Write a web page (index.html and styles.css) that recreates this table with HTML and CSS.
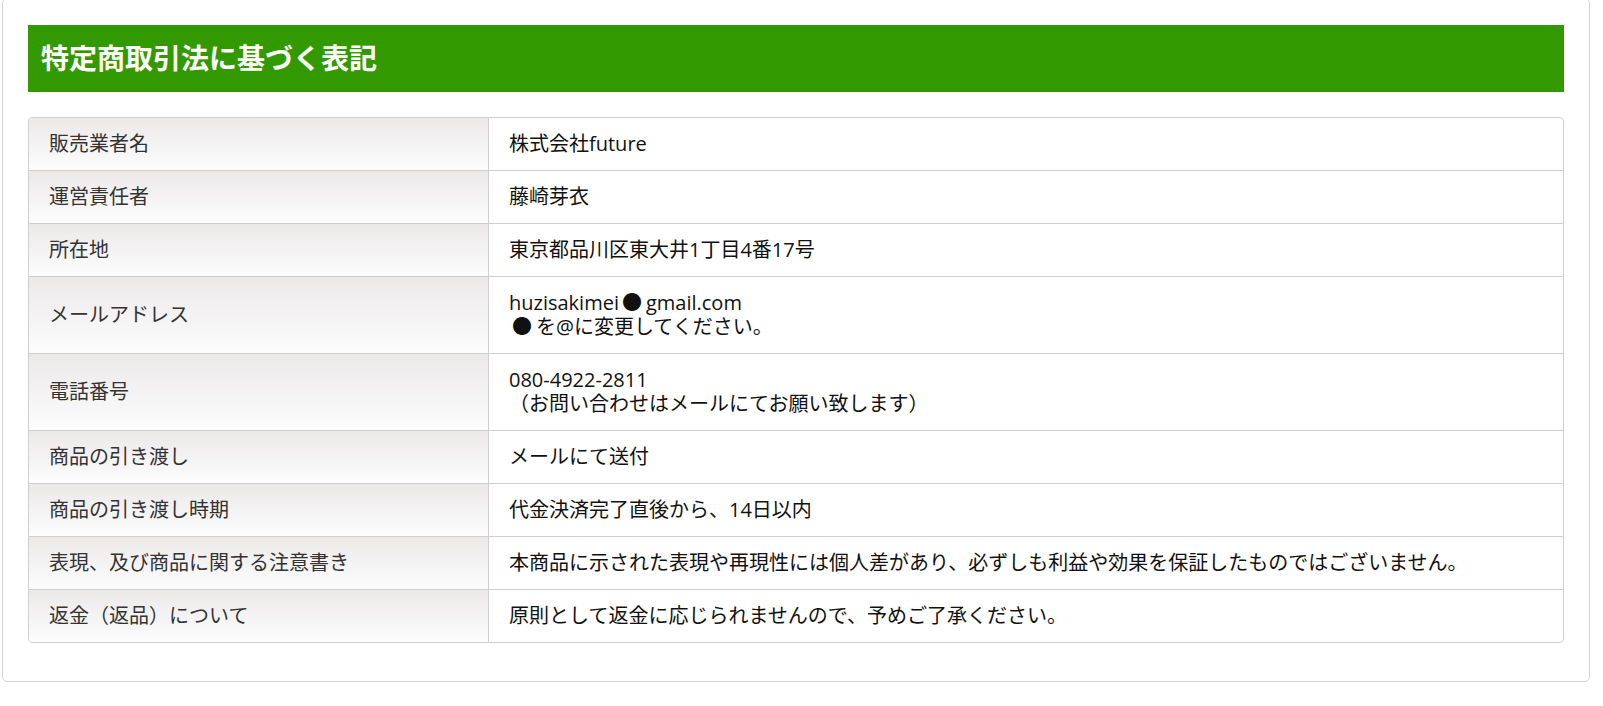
FILE: index.html
```html
<!DOCTYPE html>
<html lang="ja">
<head>
  <meta charset="UTF-8">
  <title>特定商取引法に基づく表記</title>
  <link rel="stylesheet" href="styles.css">
</head>
<body>
  <div class="content-box">
    <h2 class="page-title">特定商取引法に基づく表記</h2>

    <table class="law-table">
      <tr>
        <th>販売業者名</th>
        <td>株式会社future</td>
      </tr>
      <tr>
        <th>運営責任者</th>
        <td>藤崎芽衣</td>
      </tr>
      <tr>
        <th>所在地</th>
        <td>東京都品川区東大井1丁目4番17号</td>
      </tr>
      <tr>
        <th>メールアドレス</th>
        <td>huzisakimei<span class="dot">●</span>gmail.com<br><span class="dot">●</span>を@に変更してください。</td>
      </tr>
      <tr>
        <th>電話番号</th>
        <td>080-4922-2811<br>（お問い合わせはメールにてお願い致します）</td>
      </tr>
      <tr>
        <th>商品の引き渡し</th>
        <td>メールにて送付</td>
      </tr>
      <tr>
        <th>商品の引き渡し時期</th>
        <td>代金決済完了直後から、14日以内</td>
      </tr>
      <tr>
        <th>表現、及び商品に関する注意書き</th>
        <td>本商品に示された表現や再現性には個人差があり、必ずしも利益や効果を保証したものではございません。</td>
      </tr>
      <tr>
        <th>返金（返品）について</th>
        <td>原則として返金に応じられませんので、予めご了承ください。</td>
      </tr>
    </table>
  </div>
</body>
</html>
```

FILE: styles.css
```css
body {
  margin: 0;
  background: #fff;
  font-family: 'Open Sans', 'Noto Sans CJK JP', sans-serif;
}
.content-box {
  width: 1588px;
  box-sizing: border-box;
  margin: -2px 0 0 2px;
  padding: 26px 25px 38px;
  border: 1px solid #d3d3d3;
  border-radius: 5px;
  background: #fff;
}
.page-title {
  margin: 0 0 25px;
  height: 67px;
  padding: 0 13px;
  box-sizing: border-box;
  background-color: #339900;
  color: #fff;
  font-family: 'Noto Sans CJK JP', sans-serif;
  font-size: 28px;
  font-weight: bold;
  line-height: 65px;
}
.law-table {
  width: 100%;
  border-collapse: separate;
  border-spacing: 0;
  table-layout: fixed;
  border: 1px solid #cfcfcf;
  border-radius: 4px;
  overflow: hidden;
  font-size: 20px;
  line-height: 24px;
}
.law-table th,
.law-table td {
  padding: 14px 20px;
  border-bottom: 1px solid #cfcfcf;
  text-align: left;
  vertical-align: middle;
}
.law-table tr:last-child th,
.law-table tr:last-child td {
  border-bottom: none;
}
.law-table th {
  width: 419px;
  border-right: 1px solid #cfcfcf;
  background: linear-gradient(#ebe8e8, #fdfdfd);
  color: #333;
  font-weight: normal;
}
.law-table td {
  color: #111;
}
.dot {
  padding: 0 4px 0 3px;
}
```
